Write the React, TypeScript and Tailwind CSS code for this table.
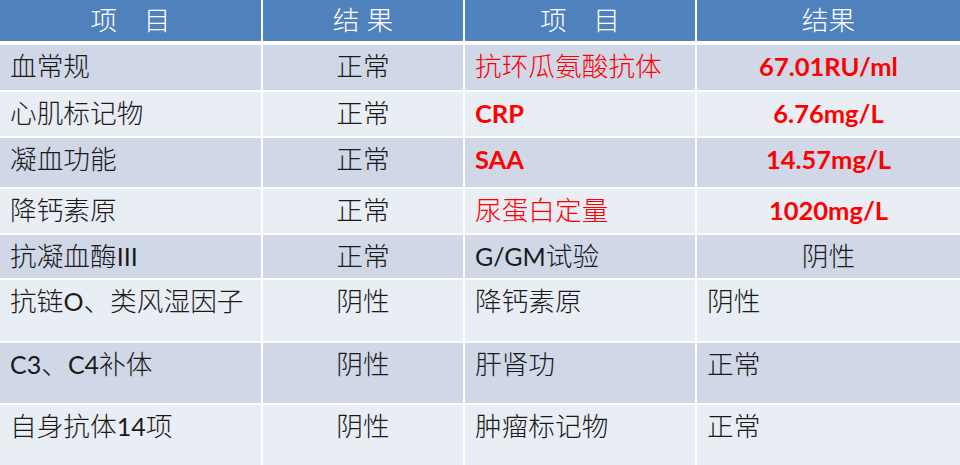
const font = "font-['Lato','Noto_Sans_CJK_SC',sans-serif]";

type Cell = { text: string; red?: boolean; bold?: boolean; center?: boolean };

const rows: { h: string; dark: boolean; cells: Cell[] }[] = [
  {
    h: "h-[45px]",
    dark: true,
    cells: [
      { text: "血常规" },
      { text: "正常", center: true },
      { text: "抗环瓜氨酸抗体", red: true },
      { text: "67.01RU/ml", red: true, bold: true, center: true },
    ],
  },
  {
    h: "h-[44px]",
    dark: false,
    cells: [
      { text: "心肌标记物" },
      { text: "正常", center: true },
      { text: "CRP", red: true, bold: true },
      { text: "6.76mg/L", red: true, bold: true, center: true },
    ],
  },
  {
    h: "h-[49px]",
    dark: true,
    cells: [
      { text: "凝血功能" },
      { text: "正常", center: true },
      { text: "SAA", red: true, bold: true },
      { text: "14.57mg/L", red: true, bold: true, center: true },
    ],
  },
  {
    h: "h-[44px]",
    dark: false,
    cells: [
      { text: "降钙素原" },
      { text: "正常", center: true },
      { text: "尿蛋白定量", red: true },
      { text: "1020mg/L", red: true, bold: true, center: true },
    ],
  },
  {
    h: "h-[43px]",
    dark: true,
    cells: [
      { text: "抗凝血酶III" },
      { text: "正常", center: true },
      { text: "G/GM试验" },
      { text: "阴性", center: true },
    ],
  },
  {
    h: "h-[61px]",
    dark: false,
    cells: [
      { text: "抗链O、类风湿因子" },
      { text: "阴性", center: true },
      { text: "降钙素原" },
      { text: "阴性" },
    ],
  },
  {
    h: "h-[60px]",
    dark: true,
    cells: [
      { text: "C3、C4补体" },
      { text: "阴性", center: true },
      { text: "肝肾功" },
      { text: "正常" },
    ],
  },
  {
    h: "h-[60px]",
    dark: false,
    cells: [
      { text: "自身抗体14项" },
      { text: "阴性", center: true },
      { text: "肿瘤标记物" },
      { text: "正常" },
    ],
  },
];

const headers = ["项　目", "结 果", "项　目", "结果"];

// latin runs are set in regular weight, CJK stays light
function Mixed({ text }: { text: string }) {
  const parts = text.split(/([A-Za-z0-9/.]+)/).filter(Boolean);
  return (
    <>
      {parts.map((p, i) =>
        /^[A-Za-z0-9/.]+$/.test(p) ? (
          <span key={i} className="text-[25px] font-normal">
            {p}
          </span>
        ) : (
          <span key={i}>{p}</span>
        )
      )}
    </>
  );
}

export default function App() {
  return (
    <div className={`h-[465px] w-[960px] overflow-hidden bg-white ${font}`}>
      {/* Header row */}
      <div className="grid h-[41px] grid-cols-[261px_200px_230px_263px] gap-x-[2px]">
        {headers.map((t, i) => (
          <div
            key={i}
            className="flex items-center justify-center bg-[#4f81bd] text-[26.7px] font-light leading-none text-white"
          >
            {t}
          </div>
        ))}
      </div>

      {/* Body */}
      <div className="mt-[4px] flex flex-col gap-y-[2px]">
        {rows.map((r, ri) => (
          <div
            key={ri}
            className={`grid grid-cols-[261px_200px_230px_263px] gap-x-[2px] ${r.h}`}
          >
            {r.cells.map((c, ci) => (
              <div
                key={ci}
                className={[
                  r.dark ? "bg-[#d0d8e8]" : "bg-[#e9edf4]",
                  "whitespace-nowrap px-[10px] leading-[42px]",
                  c.center ? "text-center" : "text-left",
                  c.red ? "text-[#ff0000]" : "text-[#1a1a1a]",
                  c.bold ? "text-[25.5px] font-bold" : "text-[26.7px] font-light",
                ].join(" ")}
              >
                {c.bold ? c.text : <Mixed text={c.text} />}
              </div>
            ))}
          </div>
        ))}
      </div>
    </div>
  );
}
